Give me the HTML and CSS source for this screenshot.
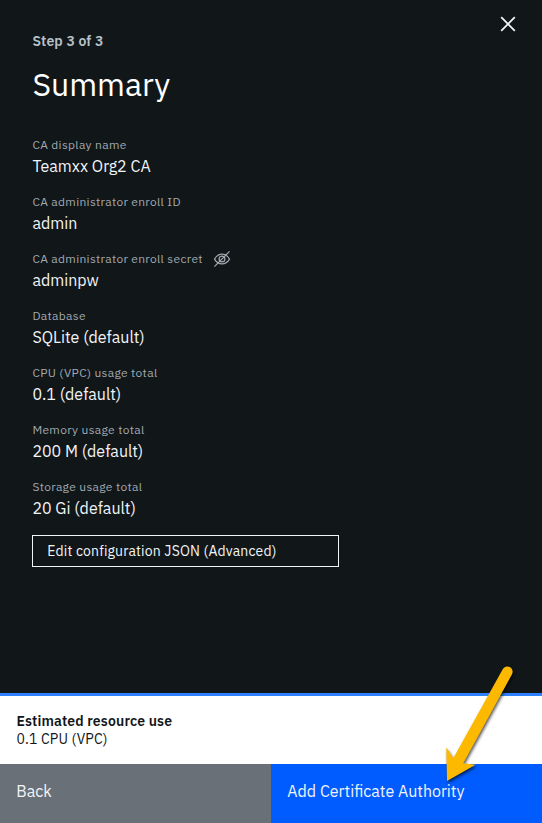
FILE: index.html
```
<!DOCTYPE html>
<html lang="en">
<head>
<meta charset="utf-8">
<title>Add Certificate Authority</title>
<link rel="stylesheet" href="styles.css">
</head>
<body>
<div class="panel">
  <main class="content">
    <button class="close" aria-label="Close"><svg width="16" height="16" viewBox="0 0 16 16"><path d="M1.2 1.2 14.8 14.8M14.8 1.2 1.2 14.8"/></svg></button>
    <p class="step">Step 3 of 3</p>
    <h1 class="title">Summary</h1>
    <dl class="fields">
      <div class="field"><dt>CA display name</dt><dd>Teamxx Org2 CA</dd></div>
      <div class="field"><dt>CA administrator enroll ID</dt><dd>admin</dd></div>
      <div class="field"><dt>CA administrator enroll secret
        <svg class="eye" width="18" height="18" viewBox="0 0 18 18"><path d="M1.500 9.100C3.300 5.900 6 4.200 9 4.200s5.700 1.700 7.500 4.900C14.700 12.200 12 13.800 9 13.800s-5.700-1.600-7.500-4.700Z"/><circle cx="9" cy="9" r="2.900"/><path d="M1.400 16.600 16.500 1.400"/></svg></dt><dd>adminpw</dd></div>
      <div class="field"><dt>Database</dt><dd>SQLite (default)</dd></div>
      <div class="field"><dt>CPU (VPC) usage total</dt><dd>0.1 (default)</dd></div>
      <div class="field"><dt>Memory usage total</dt><dd>200 M (default)</dd></div>
      <div class="field"><dt>Storage usage total</dt><dd>20 Gi (default)</dd></div>
    </dl>
    <button class="edit">Edit configuration JSON (Advanced)</button>
  </main>
  <section class="estimate">
    <strong>Estimated resource use</strong>
    <span>0.1 CPU (VPC)</span>
  </section>
  <footer class="actions">
    <button class="back">Back</button>
    <button class="add">Add Certificate Authority</button>
  </footer>
  <svg class="arrow" width="82" height="130" viewBox="0 0 82 130"><path d="M61.700 13.300 12.300 102.300 5.300 91.300 6 125 34.500 108.700 22.300 107.300 71 18.200A5 5 0 0 0 61.700 13.300Z"/></svg>
</div>
</body>
</html>
```
FILE: styles.css
```
* { box-sizing: border-box; }
body { margin: 0; font-family: "IBM Plex Sans", Roboto, "Liberation Sans", sans-serif; }
button { font: inherit; border: 0; border-radius: 0; text-align: left; }
p, h1, dl, dd { margin: 0; }
.panel { position: relative; display: flex; flex-direction: column; width: 542px; height: 823px; background: #111619; overflow: hidden; }
.content { flex: 1; padding: 32px 32px 0; }
.close { position: absolute; top: 16px; right: 26px; width: 16px; height: 16px; padding: 0; background: none; }
.close svg { display: block; }
.close path { stroke: #f2f4f8; stroke-width: 1.8; }
.step { padding-left: .4px; color: #b8c1c8; font-size: 14px; font-weight: 600; line-height: 18px; letter-spacing: .16px; }
.title { margin-top: 14px; padding-left: .4px; color: #fff; font-size: 32px; font-weight: 400; line-height: 40px; }
.fields { margin-top: 33px; padding-left: .4px; }
.field { height: 57px; }
.field dt { display: flex; align-items: center; height: 16px; color: #a2a9b0; font-size: 12px; line-height: 16px; letter-spacing: .32px; white-space: nowrap; }
.field dd { margin-top: 2px; color: #f2f4f8; font-size: 16px; line-height: 22px; }
.eye { margin-left: 10.6px; fill: none; stroke: #a2a9b0; stroke-width: 1.2; }
.edit { display: block; width: 307px; height: 32px; margin-top: -1px; padding: 0 14.3px; border: 1px solid #f2f4f8; background: none; color: #f2f4f8; font-size: 14px; line-height: 30px; letter-spacing: .16px; }
.estimate { display: flex; flex-direction: column; height: 71px; padding: 16px 16.4px 0; border-top: 3px solid #2d80ff; background: #fff; color: #121619; font-size: 14px; line-height: 18px; letter-spacing: .16px; }
.estimate strong { font-weight: 600; }
.actions { display: grid; grid-template-columns: 1fr 1fr; height: 59px; }
.actions button { padding: 0 16.3px 5px; color: #f2f4f8; font-size: 16px; }
.actions .back { background: #697077; }
.actions .add { background: #005cff; }
.arrow { position: absolute; left: 441px; top: 656px; fill: #fdb900; filter: drop-shadow(1px 2px 1.5px rgba(0, 0, 0, .65)); }
```
